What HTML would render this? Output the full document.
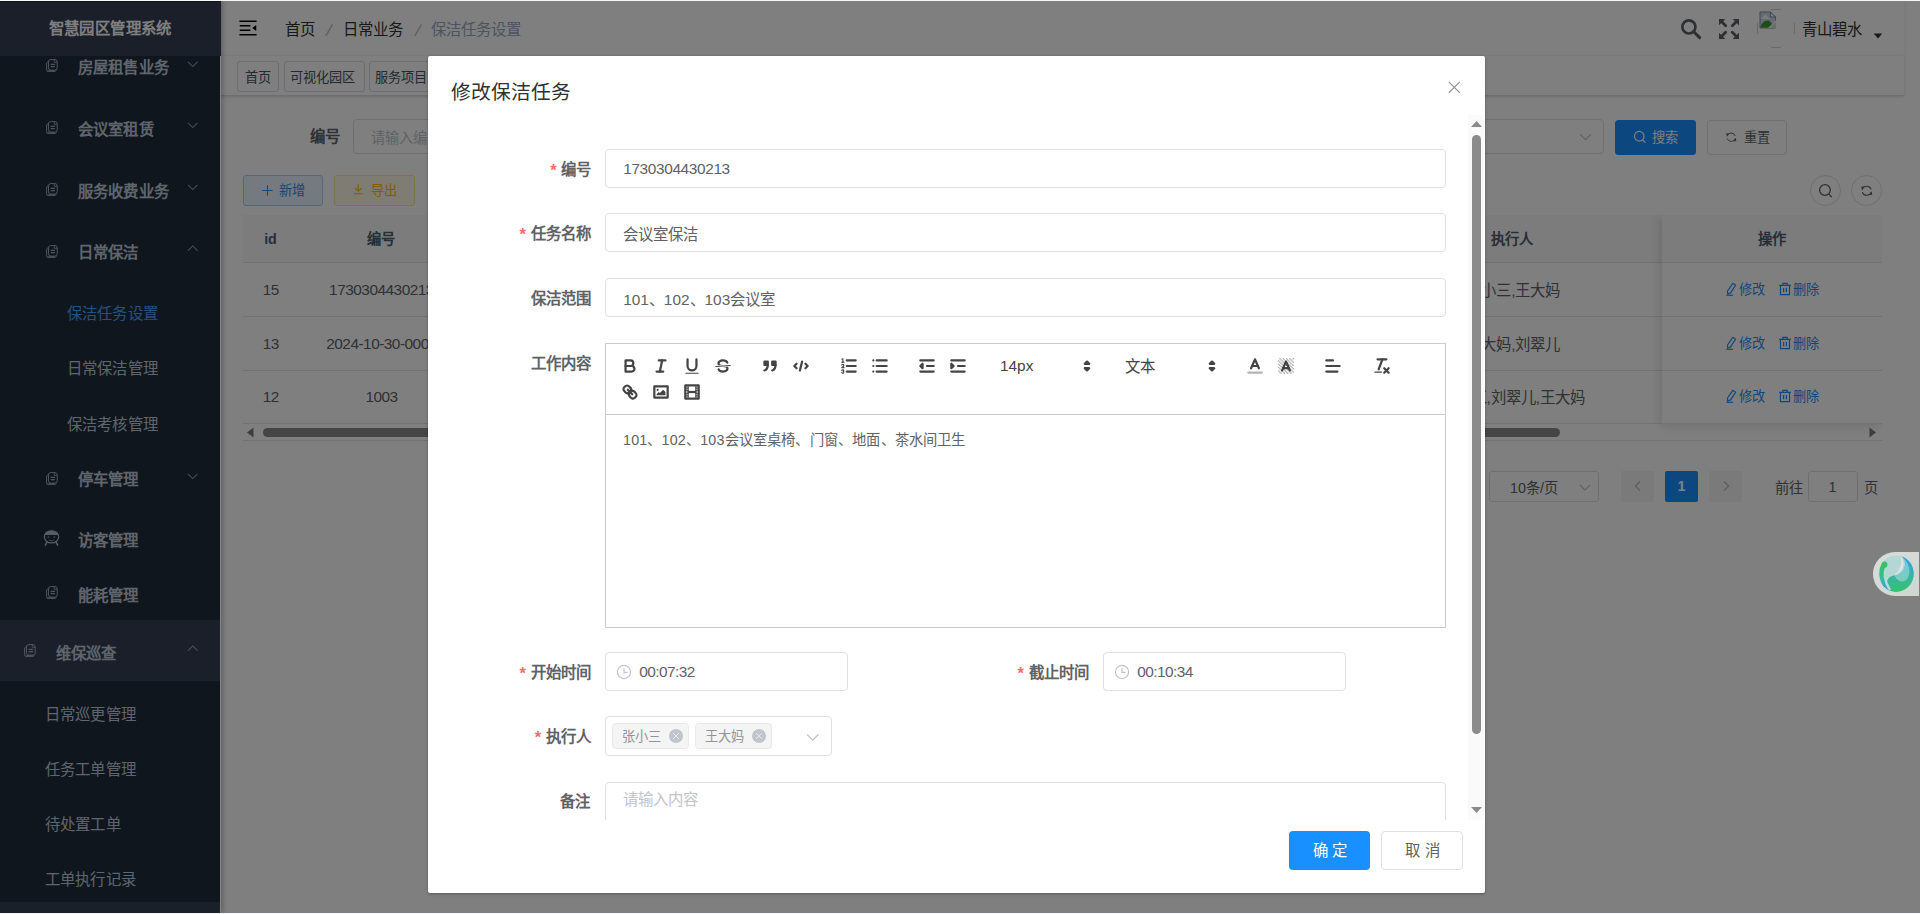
<!DOCTYPE html>
<html lang="zh-CN">
<head>
<meta charset="utf-8">
<title>智慧园区管理系统</title>
<style>
*{box-sizing:border-box;margin:0;padding:0}
html,body{width:1920px;height:914px;overflow:hidden;background:#fff}
body{font-family:"Liberation Sans",sans-serif;font-size:15.4px;color:#303133;position:relative}
svg{display:block}
.abs{position:absolute}
.t{position:absolute;white-space:nowrap;line-height:20px;height:20px}
#app{position:absolute;left:0;top:0;width:1920px;height:914px;overflow:hidden;background:#fff}
.sidebar{position:absolute;left:0;top:0;width:220px;height:914px;background:#1f2d3d;overflow:hidden;box-shadow:2px 0 6px rgba(0,21,41,.35);z-index:5;color:#bfcbd9}
.logo{position:absolute;left:0;top:0;width:221px;height:56px;background:#343e54;z-index:6}
.main{position:absolute;left:0;top:0;width:1904px;height:914px;background:#fff}
.navbar{position:absolute;left:220px;top:0;width:1684px;height:56px;background:#fff;box-shadow:0 1px 4px rgba(0,21,41,.08)}
.tags{position:absolute;left:220px;top:56px;width:1684px;height:40px;background:#fff;border-bottom:1px solid #d8dce5;box-shadow:0 1px 3px 0 rgba(0,0,0,.12),0 0 3px 0 rgba(0,0,0,.04)}
.tag{position:absolute;height:30px;border:1px solid #d8dce5;border-radius:3px;background:#fff}
.box{position:absolute;border:1px solid #dcdfe6;border-radius:4px;background:#fff}
.hl{position:absolute;height:1px;background:#dfe6ec}
.overlay{position:absolute;left:0;top:0;width:1920px;height:914px;background:rgba(0,0,0,.5);z-index:50}
.edge-top{position:absolute;left:0;top:0;width:1920px;height:1px;background:#f7f7f5;z-index:60}
.edge-bot{position:absolute;left:0;top:913px;width:1920px;height:1px;background:#f4f8fa;z-index:60}
.dialog{position:absolute;left:428px;top:56px;width:1057px;height:837px;background:#fff;border-radius:2px;box-shadow:0 1px 3px rgba(0,0,0,.3);z-index:70;overflow:hidden}
.g{position:absolute;left:-428px;top:-56px;width:1920px;height:914px}
.clip{position:absolute;left:0;top:59px;width:1057px;height:705px;overflow:hidden}
.clip .g{top:-115px}
.qi{position:absolute;width:20px;height:20px}
.qi .s{fill:none;stroke:#444;stroke-linecap:round;stroke-linejoin:round;stroke-width:2}
.qi .f{fill:#444}
.qi .t1{stroke-width:1}
</style>
</head>
<body>
<div id="app">
  <div class="sidebar">
    <div class="abs" style="left:0px;top:620px;width:220px;height:61px;background:#343f53"></div>
    <div class="abs" style="left:0px;top:902px;width:220px;height:12px;background:#343f53"></div>
    <span class="t" style="top:57.8px;font-size:15.4px;font-weight:bold;width:91.81px;text-align-last:justify;left:77.5px;letter-spacing:.3px;">房屋租售业务</span>
    <svg class="abs" style="left:45.85px;top:58.8px;width:11.7px;height:13.2px" viewBox="0 0 11.700 13.200" fill="none" stroke="currentColor" stroke-width="1" opacity=".8"><rect x="2.500" y="0.550" width="8.700" height="10.600" rx="2.300"/><path d="M8.300 0.700v2.600h2.800" stroke-width=".9"/><path d="M4.700 5.500h4.300M4.700 7.600h4.300" stroke-width="1.250"/><path d="M2.500 2.300L0.600 3.900v6.900a1.900 1.900 0 0 0 1.900 1.900h5.700a2.400 2.400 0 0 0 2.100-1.400"/><path d="M2.200 11.900h6.600" stroke-width="1.300"/></svg>
    <svg class="abs" style="left:186.55px;top:57.95px;width:11.5px;height:11.5px" viewBox="0 0 12 12" fill="none" stroke="currentColor" stroke-width="1.1" opacity="0.7"><path d="M1 4l5 5 5-5"/></svg>
    <span class="t" style="top:119.6px;font-size:15.4px;font-weight:bold;width:76.5px;text-align-last:justify;left:77.5px;letter-spacing:.3px;">会议室租赁</span>
    <svg class="abs" style="left:45.85px;top:120.8px;width:11.7px;height:13.2px" viewBox="0 0 11.700 13.200" fill="none" stroke="currentColor" stroke-width="1" opacity=".8"><rect x="2.500" y="0.550" width="8.700" height="10.600" rx="2.300"/><path d="M8.300 0.700v2.600h2.800" stroke-width=".9"/><path d="M4.700 5.500h4.300M4.700 7.600h4.300" stroke-width="1.250"/><path d="M2.500 2.300L0.600 3.900v6.900a1.900 1.900 0 0 0 1.900 1.900h5.700a2.400 2.400 0 0 0 2.100-1.400"/><path d="M2.200 11.900h6.600" stroke-width="1.300"/></svg>
    <svg class="abs" style="left:186.55px;top:119.05px;width:11.5px;height:11.5px" viewBox="0 0 12 12" fill="none" stroke="currentColor" stroke-width="1.1" opacity="0.7"><path d="M1 4l5 5 5-5"/></svg>
    <span class="t" style="top:181.6px;font-size:15.4px;font-weight:bold;width:91.81px;text-align-last:justify;left:77.5px;letter-spacing:.3px;">服务收费业务</span>
    <svg class="abs" style="left:45.85px;top:182.7px;width:11.7px;height:13.2px" viewBox="0 0 11.700 13.200" fill="none" stroke="currentColor" stroke-width="1" opacity=".8"><rect x="2.500" y="0.550" width="8.700" height="10.600" rx="2.300"/><path d="M8.300 0.700v2.600h2.800" stroke-width=".9"/><path d="M4.700 5.500h4.300M4.700 7.600h4.300" stroke-width="1.250"/><path d="M2.500 2.300L0.600 3.900v6.900a1.900 1.900 0 0 0 1.900 1.900h5.700a2.400 2.400 0 0 0 2.100-1.400"/><path d="M2.200 11.900h6.600" stroke-width="1.300"/></svg>
    <svg class="abs" style="left:186.55px;top:180.95px;width:11.5px;height:11.5px" viewBox="0 0 12 12" fill="none" stroke="currentColor" stroke-width="1.1" opacity="0.7"><path d="M1 4l5 5 5-5"/></svg>
    <span class="t" style="top:243.3px;font-size:15.4px;font-weight:bold;width:61.2px;text-align-last:justify;left:77.5px;letter-spacing:.3px;">日常保洁</span>
    <svg class="abs" style="left:45.85px;top:244.7px;width:11.7px;height:13.2px" viewBox="0 0 11.700 13.200" fill="none" stroke="currentColor" stroke-width="1" opacity=".8"><rect x="2.500" y="0.550" width="8.700" height="10.600" rx="2.300"/><path d="M8.300 0.700v2.600h2.800" stroke-width=".9"/><path d="M4.700 5.500h4.300M4.700 7.600h4.300" stroke-width="1.250"/><path d="M2.500 2.300L0.600 3.900v6.900a1.900 1.900 0 0 0 1.900 1.900h5.700a2.400 2.400 0 0 0 2.100-1.400"/><path d="M2.200 11.900h6.600" stroke-width="1.300"/></svg>
    <svg class="abs" style="left:186.55px;top:242.95px;width:11.5px;height:11.5px" viewBox="0 0 12 12" fill="none" stroke="currentColor" stroke-width="1.1" opacity="0.7"><path d="M1 8L6 3l5 5"/></svg>
    <span class="t" style="top:304.2px;font-size:15.4px;color:#4aa3ff;width:91.81px;text-align-last:justify;left:66.5px;letter-spacing:.3px;">保洁任务设置</span>
    <span class="t" style="top:359.4px;font-size:15.4px;width:91.81px;text-align-last:justify;left:66.5px;letter-spacing:.3px;">日常保洁管理</span>
    <span class="t" style="top:414.5px;font-size:15.4px;width:91.81px;text-align-last:justify;left:66.5px;letter-spacing:.3px;">保洁考核管理</span>
    <span class="t" style="top:470.3px;font-size:15.4px;font-weight:bold;width:61.2px;text-align-last:justify;left:77.5px;letter-spacing:.3px;">停车管理</span>
    <svg class="abs" style="left:45.85px;top:471.8px;width:11.7px;height:13.2px" viewBox="0 0 11.700 13.200" fill="none" stroke="currentColor" stroke-width="1" opacity=".8"><rect x="2.500" y="0.550" width="8.700" height="10.600" rx="2.300"/><path d="M8.300 0.700v2.600h2.800" stroke-width=".9"/><path d="M4.700 5.500h4.300M4.700 7.600h4.300" stroke-width="1.250"/><path d="M2.500 2.300L0.600 3.900v6.900a1.900 1.900 0 0 0 1.900 1.900h5.700a2.400 2.400 0 0 0 2.100-1.400"/><path d="M2.200 11.900h6.600" stroke-width="1.300"/></svg>
    <svg class="abs" style="left:186.55px;top:469.85px;width:11.5px;height:11.5px" viewBox="0 0 12 12" fill="none" stroke="currentColor" stroke-width="1.1" opacity="0.7"><path d="M1 4l5 5 5-5"/></svg>
    <span class="t" style="top:530.5px;font-size:15.4px;font-weight:bold;width:61.2px;text-align-last:justify;left:77.5px;letter-spacing:.3px;">访客管理</span>
    <svg class="abs" style="left:43.1px;top:529.6px;width:17px;height:16px" viewBox="0 0 17 16" opacity=".9"><clipPath id="pc"><rect x="0" y="0" width="17" height="4.900"/></clipPath><ellipse cx="8.500" cy="6.850" rx="7.200" ry="6.100" fill="none" stroke="currentColor" stroke-width="1.250"/><ellipse cx="8.500" cy="6.850" rx="7.200" ry="6.100" fill="currentColor" clip-path="url(#pc)"/><circle cx="5.500" cy="7" r=".85" fill="currentColor" opacity=".8"/><circle cx="11.450" cy="7" r=".85" fill="currentColor" opacity=".8"/><path d="M6 9.900c1.300.9 3.400.9 4.900 0" stroke="currentColor" stroke-width=".9" fill="none" opacity=".8"/><path d="M3.800 12.300L2.400 15.200M13.200 12.300l1.400 2.900" stroke="currentColor" stroke-width="1.500" fill="none" stroke-linecap="round"/></svg>
    <span class="t" style="top:585.6px;font-size:15.4px;font-weight:bold;width:61.2px;text-align-last:justify;left:77.5px;letter-spacing:.3px;">能耗管理</span>
    <svg class="abs" style="left:45.85px;top:585.9px;width:11.7px;height:13.2px" viewBox="0 0 11.700 13.200" fill="none" stroke="currentColor" stroke-width="1" opacity=".8"><rect x="2.500" y="0.550" width="8.700" height="10.600" rx="2.300"/><path d="M8.300 0.700v2.600h2.800" stroke-width=".9"/><path d="M4.700 5.500h4.300M4.700 7.600h4.300" stroke-width="1.250"/><path d="M2.500 2.300L0.600 3.900v6.900a1.900 1.900 0 0 0 1.900 1.900h5.700a2.400 2.400 0 0 0 2.100-1.400"/><path d="M2.200 11.900h6.600" stroke-width="1.300"/></svg>
    <span class="t" style="top:643.8px;font-size:15.4px;font-weight:bold;width:61.2px;text-align-last:justify;left:55.5px;letter-spacing:.3px;">维保巡查</span>
    <svg class="abs" style="left:23.85px;top:643.9px;width:11.7px;height:13.2px" viewBox="0 0 11.700 13.200" fill="none" stroke="currentColor" stroke-width="1" opacity=".8"><rect x="2.500" y="0.550" width="8.700" height="10.600" rx="2.300"/><path d="M8.300 0.700v2.600h2.800" stroke-width=".9"/><path d="M4.700 5.500h4.300M4.700 7.600h4.300" stroke-width="1.250"/><path d="M2.500 2.300L0.600 3.900v6.900a1.900 1.900 0 0 0 1.900 1.900h5.700a2.400 2.400 0 0 0 2.100-1.400"/><path d="M2.200 11.900h6.600" stroke-width="1.300"/></svg>
    <svg class="abs" style="left:186.55px;top:642.95px;width:11.5px;height:11.5px" viewBox="0 0 12 12" fill="none" stroke="currentColor" stroke-width="1.1" opacity="0.7"><path d="M1 8L6 3l5 5"/></svg>
    <span class="t" style="top:704.5px;font-size:15.4px;width:91.81px;text-align-last:justify;left:44.5px;letter-spacing:.3px;">日常巡更管理</span>
    <span class="t" style="top:759.5px;font-size:15.4px;width:91.81px;text-align-last:justify;left:44.5px;letter-spacing:.3px;">任务工单管理</span>
    <span class="t" style="top:814.5px;font-size:15.4px;width:76.5px;text-align-last:justify;left:44.5px;letter-spacing:.3px;">待处置工单</span>
    <span class="t" style="top:869.6px;font-size:15.4px;width:91.81px;text-align-last:justify;left:44.5px;letter-spacing:.3px;">工单执行记录</span>
  </div>
  <div class="logo"><span class="t" style="top:18.8px;font-size:15.4px;color:#fff;font-weight:bold;width:123.2px;text-align-last:justify;left:48.7px;letter-spacing:.4px;">智慧园区管理系统</span></div>
  <div class="main">
    <div class="navbar"></div>
    <svg class="abs" style="left:237px;top:17px;width:22px;height:22px;transform:rotate(180deg)" viewBox="0 0 1024 1024" fill="#000"><path d="M408 442h480c4.400 0 8-3.600 8-8v-56c0-4.400-3.600-8-8-8H408c-4.400 0-8 3.600-8 8v56c0 4.400 3.600 8 8 8zm-8 204c0 4.400 3.600 8 8 8h480c4.400 0 8-3.600 8-8v-56c0-4.400-3.600-8-8-8H408c-4.400 0-8 3.600-8 8v56zm504-486H120c-4.400 0-8 3.600-8 8v56c0 4.400 3.600 8 8 8h784c4.400 0 8-3.600 8-8v-56c0-4.400-3.600-8-8-8zm0 632H120c-4.400 0-8 3.600-8 8v56c0 4.400 3.600 8 8 8h784c4.400 0 8-3.600 8-8v-56c0-4.400-3.600-8-8-8zM142.400 642.100L298.700 519a8.840 8.840 0 0 0 0-13.900L142.400 381.900c-5.800-4.600-14.400-.5-14.400 6.900v246.300a8.900 8.900 0 0 0 14.400 7z"/></svg>
    <span class="t" style="top:20px;font-size:15.4px;width:30px;text-align-last:justify;left:285px;">首页</span>
    <svg class="abs" style="left:325.3px;top:23.8px;width:8.4px;height:12.4px" viewBox="0 0 8.400 12.400" stroke="#c0c4cc" stroke-width="1.500" fill="none"><path d="M0.900 12L7.500 0.400"/></svg>
    <span class="t" style="top:20px;font-size:15.4px;width:60px;text-align-last:justify;left:343px;">日常业务</span>
    <svg class="abs" style="left:413.8px;top:23.8px;width:8.4px;height:12.4px" viewBox="0 0 8.400 12.400" stroke="#c0c4cc" stroke-width="1.500" fill="none"><path d="M0.900 12L7.500 0.400"/></svg>
    <span class="t" style="top:20px;font-size:15.4px;color:#97a8be;width:90px;text-align-last:justify;left:431px;">保洁任务设置</span>
    <svg class="abs" style="left:1679px;top:17px;width:24px;height:24px" viewBox="0 0 24 24" fill="none" stroke="#5a5e66" stroke-linecap="round"><circle cx="9.900" cy="9.900" r="6.550" stroke-width="2.600"/><path d="M15 15L20.600 20.600" stroke-width="3"/></svg>
    <svg class="abs" style="left:1719px;top:19px;width:20px;height:20px" viewBox="0 0 20 20" fill="#5a5e66" stroke="#5a5e66"><g><path d="M0 0h6.300L0 6.300z" stroke="none"/><path d="M2.500 2.500L6.700 6.700" fill="none" stroke-width="2.800" stroke-linecap="round"/></g><g transform="translate(20 0) scale(-1 1)"><path d="M0 0h6.300L0 6.300z" stroke="none"/><path d="M2.500 2.500L6.700 6.700" fill="none" stroke-width="2.800" stroke-linecap="round"/></g><g transform="translate(0 20) scale(1 -1)"><path d="M0 0h6.300L0 6.300z" stroke="none"/><path d="M2.500 2.500L6.700 6.700" fill="none" stroke-width="2.800" stroke-linecap="round"/></g><g transform="translate(20 20) scale(-1 -1)"><path d="M0 0h6.300L0 6.300z" stroke="none"/><path d="M2.500 2.500L6.700 6.700" fill="none" stroke-width="2.800" stroke-linecap="round"/></g></svg>
    <div class="abs" style="left:1771px;top:9px;width:10px;height:1px;background:#d0d0d0"></div>
    <div class="abs" style="left:1771px;top:47px;width:10px;height:1px;background:#d0d0d0"></div>
    <div class="abs" style="left:1757px;top:23px;width:1px;height:11px;background:#d0d0d0"></div>
    <div class="abs" style="left:1794px;top:23px;width:1px;height:11px;background:#d0d0d0"></div>
    <svg class="abs" style="left:1759px;top:11px;width:18px;height:18px" viewBox="0 0 18 18" ><path d="M1 1h10.500l5 5v11H1z" fill="#c9d7f1" stroke="#8a8f98" stroke-width="1"/><path d="M11.500 1v5h5z" fill="#fff" stroke="#8a8f98" stroke-width="1"/><path d="M1.500 16.500c1-5 5-8 9-6.500l6 6.500z" fill="#3c9a2c"/><path d="M2 8l4.500-4.500L11 8z" fill="#fff" opacity=".85"/><path d="M17 9L9 17h8z" fill="#fff"/><path d="M17 10.500L10.500 17H17z" fill="#d9dde4"/></svg>
    <span class="t" style="top:20.3px;font-size:15.4px;width:60px;text-align-last:justify;left:1802px;">青山碧水</span>
    <svg class="abs" style="left:1873px;top:33px;width:10px;height:6px" viewBox="0 0 10 6" fill="#303133"><path d="M0.800 0.500h8.400L5 5.500z"/></svg>
    <div class="tags"></div>
    <div class="tag" style="left:237px;top:61px;width:42px;height:30.600px"></div>
    <span class="t" style="top:68.2px;font-size:13.2px;color:#495060;width:26px;text-align-last:justify;left:245.3px;">首页</span>
    <div class="tag" style="left:284px;top:61px;width:81px;height:30.600px"></div>
    <span class="t" style="top:68.2px;font-size:13.2px;color:#495060;width:65px;text-align-last:justify;left:290px;">可视化园区</span>
    <div class="tag" style="left:369px;top:61px;width:92px;height:30.600px"></div>
    <span class="t" style="top:68.2px;font-size:13.2px;color:#495060;width:78px;text-align-last:justify;left:375px;">服务项目管理</span>
    <span class="t" style="top:127px;font-size:15.4px;color:#606266;font-weight:bold;width:30px;text-align-last:justify;left:309.7px;">编号</span>
    <div class="box" style="left:353px;top:119.400px;width:260px;height:34.600px"></div>
    <span class="t" style="top:128px;font-size:14.3px;color:#c0c4cc;width:70px;text-align-last:justify;left:371px;">请输入编号</span>
    <div class="box" style="left:1344px;top:119.400px;width:260px;height:34.600px"></div>
    <svg class="abs" style="left:1578.5px;top:130px;width:13px;height:13px" viewBox="0 0 12 12" fill="none" stroke="#c0c4cc" stroke-width="1.1" opacity="1"><path d="M1 4l5 5 5-5"/></svg>
    <div class="abs" style="left:1615px;top:120px;width:81px;height:35px;background:#1890ff;border-radius:3.500px"></div>
    <svg class="abs" style="left:1632.55px;top:130.45px;width:13.5px;height:13.5px" viewBox="0 0 14 14" fill="none" stroke="#fff" stroke-width="1.3" stroke-linecap="round"><circle cx="6.500" cy="6.500" r="5"/><path d="M10.200 10.400l2.300 2.400"/></svg>
    <span class="t" style="top:128px;font-size:13.2px;color:#fff;width:26px;text-align-last:justify;left:1652.3px;">搜索</span>
    <div class="box" style="left:1707px;top:120px;width:80px;height:35px;border-radius:3.500px"></div>
    <svg class="abs" style="left:1724.75px;top:130.75px;width:12.5px;height:12.5px" viewBox="0 0 14 14" fill="none" stroke="#606266" stroke-width="1.1" stroke-linecap="round" stroke-linejoin="round"><path d="M2.400 5.600A4.800 4.800 0 0 1 11.400 5.200"/><path d="M11.600 8.400A4.800 4.800 0 0 1 2.600 8.800"/><path d="M1.300 2.600L4.600 2.900L2 5.900z" fill="#606266" stroke="none"/><path d="M12.700 11.400L9.400 11.100L12 8.100z" fill="#606266" stroke="none"/></svg>
    <span class="t" style="top:128px;font-size:13.2px;color:#606266;width:26px;text-align-last:justify;left:1743.7px;">重置</span>
    <div class="box" style="left:243px;top:175px;width:80px;height:31px;background:#e8f4ff;border-color:#a3d3ff;border-radius:3px"></div>
    <svg class="abs" style="left:260.8px;top:184px;width:13px;height:13px" viewBox="0 0 13 13" stroke="#1890ff" stroke-width="1.050"><path d="M6.500 1.300v10.400M1.300 6.500h10.400"/></svg>
    <span class="t" style="top:181.2px;font-size:13.2px;color:#1890ff;width:26px;text-align-last:justify;left:279.2px;">新增</span>
    <div class="box" style="left:334px;top:175px;width:81px;height:31px;background:#fff8e6;border-color:#ffe399;border-radius:3px"></div>
    <svg class="abs" style="left:351.8px;top:183.3px;width:12.4px;height:12.4px" viewBox="0 0 13 13" fill="none" stroke="#ffba00" stroke-width="1.150"><path d="M6.500 1.500v7M3.200 5.300l3.300 3.300 3.300-3.300M1.800 11.300h9.400"/></svg>
    <span class="t" style="top:181.2px;font-size:13.2px;color:#ffba00;width:26px;text-align-last:justify;left:371.2px;">导出</span>
    <div class="box" style="left:1810px;top:175px;width:31px;height:31px;border-radius:50%"></div>
    <svg class="abs" style="left:1818.3px;top:183px;width:15px;height:15px" viewBox="0 0 14 14" fill="none" stroke="#606266" stroke-width="1.2" stroke-linecap="round"><circle cx="6.500" cy="6.500" r="5"/><path d="M10.200 10.400l2.300 2.400"/></svg>
    <div class="box" style="left:1851px;top:175px;width:31px;height:31px;border-radius:50%"></div>
    <svg class="abs" style="left:1860.05px;top:183.75px;width:13.5px;height:13.5px" viewBox="0 0 14 14" fill="none" stroke="#606266" stroke-width="1.1" stroke-linecap="round" stroke-linejoin="round"><path d="M2.400 5.600A4.800 4.800 0 0 1 11.400 5.200"/><path d="M11.600 8.400A4.800 4.800 0 0 1 2.600 8.800"/><path d="M1.300 2.600L4.600 2.900L2 5.900z" fill="#606266" stroke="none"/><path d="M12.700 11.400L9.400 11.100L12 8.100z" fill="#606266" stroke="none"/></svg>
    <div class="abs" style="left:243px;top:215px;width:1639px;height:47px;background:#f8f8f9"></div>
    <div class="hl" style="left:243px;top:262px;width:1639px"></div>
    <div class="hl" style="left:243px;top:316px;width:1639px"></div>
    <div class="hl" style="left:243px;top:370px;width:1639px"></div>
    <div class="hl" style="left:243px;top:423px;width:1639px"></div>
    <div class="hl" style="left:243px;top:440px;width:1639px"></div>
    <span class="t" style="top:229px;font-size:14.3px;color:#515a6e;font-weight:bold;left:70.5px;width:400px;text-align:center;">id</span>
    <span class="t" style="top:229.3px;font-size:14.3px;color:#515a6e;font-weight:bold;width:28px;text-align-last:justify;left:366.5px;">编号</span>
    <span class="t" style="top:229.3px;font-size:14.3px;color:#515a6e;font-weight:bold;width:42px;text-align-last:justify;left:1490.5px;">执行人</span>
    <span class="t" style="top:280.2px;font-size:15.4px;color:#606266;left:70.7px;width:400px;text-align:center;letter-spacing:-.5px;">15</span>
    <span class="t" style="top:280.2px;font-size:15.4px;color:#606266;left:181.5px;width:400px;text-align:center;letter-spacing:-.5px;">1730304430213</span>
    <span class="t" style="top:281.2px;font-size:15.4px;color:#606266;width:94.28px;text-align-last:justify;left:1466.16px;">张小三,王大妈</span>
    <span class="t" style="top:333.5px;font-size:15.4px;color:#606266;left:70.7px;width:400px;text-align:center;letter-spacing:-.5px;">13</span>
    <span class="t" style="top:333.5px;font-size:15.4px;color:#606266;left:181.5px;width:400px;text-align:center;letter-spacing:-.5px;">2024-10-30-0001</span>
    <span class="t" style="top:334.5px;font-size:15.4px;color:#606266;width:94.28px;text-align-last:justify;left:1466.16px;">王大妈,刘翠儿</span>
    <span class="t" style="top:387.4px;font-size:15.4px;color:#606266;left:70.7px;width:400px;text-align:center;letter-spacing:-.5px;">12</span>
    <span class="t" style="top:387.4px;font-size:15.4px;color:#606266;left:181.5px;width:400px;text-align:center;letter-spacing:-.5px;">1003</span>
    <span class="t" style="top:388.4px;font-size:15.4px;color:#606266;width:143.56px;text-align-last:justify;left:1441.52px;">张小三,刘翠儿,王大妈</span>
    <div class="abs" style="left:1662px;top:215px;width:220px;height:209px;box-shadow:-2px 2px 10px rgba(0,0,0,.13);clip-path:inset(0 0 -14px -14px);background:#fff"><div class="abs" style="left:0;top:0;width:220px;height:47px;background:#f8f8f9"></div><div class="hl" style="left:0;top:47px;width:220px"></div><div class="hl" style="left:0;top:101px;width:220px"></div><div class="hl" style="left:0;top:155px;width:220px"></div><div class="hl" style="left:0;top:208px;width:220px"></div></div>
    <span class="t" style="top:229.3px;font-size:14.3px;color:#515a6e;font-weight:bold;width:28px;text-align-last:justify;left:1757.5px;">操作</span>
    <svg class="abs" style="left:1724.2px;top:282px;width:14px;height:14px" viewBox="0 0 13 13" fill="none" stroke="#1890ff" stroke-width="1.100" stroke-linejoin="round"><path d="M8.200 1.200l2.600 1.700-4.700 7.200-2.900 1 .2-3z"/><path d="M2.200 12.300h6.200"/></svg>
    <span class="t" style="top:279.8px;font-size:13.2px;color:#1890ff;width:26px;text-align-last:justify;left:1739px;">修改</span>
    <svg class="abs" style="left:1778.3px;top:282.2px;width:14px;height:14px" viewBox="0 0 13 13" fill="none" stroke="#1890ff" stroke-width="1.100"><path d="M1 3.200h11M4.500 3V1.300h4V3M2.300 3.300v8.400h8.400V3.300M5.200 5.500v4M7.800 5.500v4"/></svg>
    <span class="t" style="top:279.8px;font-size:13.2px;color:#1890ff;width:26px;text-align-last:justify;left:1793px;">删除</span>
    <svg class="abs" style="left:1724.2px;top:335.8px;width:14px;height:14px" viewBox="0 0 13 13" fill="none" stroke="#1890ff" stroke-width="1.100" stroke-linejoin="round"><path d="M8.200 1.200l2.600 1.700-4.700 7.200-2.900 1 .2-3z"/><path d="M2.200 12.300h6.200"/></svg>
    <span class="t" style="top:333.6px;font-size:13.2px;color:#1890ff;width:26px;text-align-last:justify;left:1739px;">修改</span>
    <svg class="abs" style="left:1778.3px;top:336px;width:14px;height:14px" viewBox="0 0 13 13" fill="none" stroke="#1890ff" stroke-width="1.100"><path d="M1 3.200h11M4.500 3V1.300h4V3M2.300 3.300v8.400h8.400V3.300M5.200 5.500v4M7.800 5.500v4"/></svg>
    <span class="t" style="top:333.6px;font-size:13.2px;color:#1890ff;width:26px;text-align-last:justify;left:1793px;">删除</span>
    <svg class="abs" style="left:1724.2px;top:388.7px;width:14px;height:14px" viewBox="0 0 13 13" fill="none" stroke="#1890ff" stroke-width="1.100" stroke-linejoin="round"><path d="M8.200 1.200l2.600 1.700-4.700 7.200-2.900 1 .2-3z"/><path d="M2.200 12.300h6.200"/></svg>
    <span class="t" style="top:386.5px;font-size:13.2px;color:#1890ff;width:26px;text-align-last:justify;left:1739px;">修改</span>
    <svg class="abs" style="left:1778.3px;top:388.9px;width:14px;height:14px" viewBox="0 0 13 13" fill="none" stroke="#1890ff" stroke-width="1.100"><path d="M1 3.200h11M4.500 3V1.300h4V3M2.300 3.300v8.400h8.400V3.300M5.200 5.500v4M7.800 5.500v4"/></svg>
    <span class="t" style="top:386.5px;font-size:13.2px;color:#1890ff;width:26px;text-align-last:justify;left:1793px;">删除</span>
    <svg class="abs" style="left:246px;top:427px;width:8px;height:11px" viewBox="0 0 8 11" fill="#7d7d7d"><path d="M7.500 0.500v10L1 5.500z"/></svg>
    <div class="abs" style="left:263px;top:428px;width:1297px;height:9px;border-radius:5px;background:#8b8b8b"></div>
    <svg class="abs" style="left:1869px;top:427px;width:8px;height:11px" viewBox="0 0 8 11" fill="#7d7d7d"><path d="M0.500 0.500v10L7 5.500z"/></svg>
    <div class="box" style="left:1489px;top:471.2px;width:110px;height:30.8px;border-radius:3px"></div>
    <span class="t" style="top:478px;font-size:14.3px;color:#606266;width:47.88px;text-align-last:justify;left:1510px;">10条/页</span>
    <svg class="abs" style="left:1579px;top:481.3px;width:12px;height:12px" viewBox="0 0 12 12" fill="none" stroke="#c0c4cc" stroke-width="1.1" opacity="1"><path d="M1 4l5 5 5-5"/></svg>
    <div class="abs" style="left:1621px;top:471.2px;width:33px;height:30.8px;border-radius:2px;background:#f4f4f5"></div>
    <svg class="abs" style="left:1631.5px;top:480px;width:12px;height:12px" viewBox="0 0 12 12" fill="none" stroke="#c0c4cc" stroke-width="1.700"><path d="M8 1.500L3.500 6 8 10.500"/></svg>
    <div class="abs" style="left:1665px;top:471.2px;width:33px;height:30.8px;border-radius:2px;background:#1890ff"></div>
    <span class="t" style="top:476.2px;font-size:14.3px;color:#fff;font-weight:bold;left:1481.5px;width:400px;text-align:center;">1</span>
    <div class="abs" style="left:1709px;top:471.2px;width:33px;height:30.8px;border-radius:2px;background:#f4f4f5"></div>
    <svg class="abs" style="left:1720px;top:480px;width:12px;height:12px" viewBox="0 0 12 12" fill="none" stroke="#c0c4cc" stroke-width="1.700"><path d="M4 1.500L8.500 6 4 10.500"/></svg>
    <span class="t" style="top:477.8px;font-size:14.3px;color:#606266;width:28px;text-align-last:justify;left:1775px;">前往</span>
    <div class="box" style="left:1807.500px;top:471.2px;width:50px;height:30.8px;border-radius:3px"></div>
    <span class="t" style="top:477.2px;font-size:14.3px;color:#606266;left:1632.5px;width:400px;text-align:center;">1</span>
    <span class="t" style="top:477.8px;font-size:14.3px;color:#606266;left:1863.5px;">页</span>
  </div>
</div>
<div class="overlay"></div>
<div class="edge-top"></div>
<div class="abs" style="left:0;top:1px;width:220px;height:1px;background:#0c121f;z-index:60"></div>
<div class="edge-bot"></div>
<div class="abs" style="left:220px;top:56px;width:1px;height:857px;background:#878787;z-index:60"></div>
<div class="abs" style="left:1873px;top:552px;width:46px;height:44px;border-radius:22px 0 0 22px;background:linear-gradient(135deg,#dadedb,#cfd5d1);z-index:80"></div>
<svg class="abs" style="left:1878.400px;top:555.300px;width:36.200px;height:37.400px;z-index:81" viewBox="0 0 36 36" preserveAspectRatio="none">
  <defs>
    <linearGradient id="wg1" x1="0" y1="0" x2="0" y2="1"><stop offset="0" stop-color="#2aa3e6"/><stop offset=".55" stop-color="#3ab3a6"/><stop offset="1" stop-color="#34c46a"/></linearGradient>
    <linearGradient id="wg2" x1="0" y1="0" x2="0" y2="1"><stop offset="0" stop-color="#34c46a"/><stop offset=".6" stop-color="#3cb7a0"/><stop offset="1" stop-color="#2aa3e6"/></linearGradient>
    <clipPath id="wc"><circle cx="18" cy="18" r="17.600"/></clipPath>
  </defs>
  <g clip-path="url(#wc)">
    <circle cx="18" cy="18" r="17.600" fill="#b4d6d4"/>
    <path d="M21.500 0C27 1 36 6 36 18S28 36 17 36c-3.500 0-6-1-7.500-3C6.500 28.500 9 21 15.500 19.800 25 18 31 10 23.500 1z" fill="url(#wg1)"/>
    <path d="M24 2c6 7 3 15-7.500 17.600 1 4 5.500 7 10 5.500C33.500 22 33 8 24 2z" fill="#fff" opacity=".33"/>
    <path d="M22.300 0.600C28 8 25.500 16.500 15.500 19.800 21.500 16 24.800 9.500 22.300 0.600z" fill="#e3e6e6"/>
    <path d="M6.200 9.500C2.500 15 3 25 10.500 32.500" fill="none" stroke="url(#wg2)" stroke-width="5.200" stroke-linecap="round"/>
    <path d="M8.800 11C5.500 17 6.500 26 11.500 33" fill="none" stroke="#b9d9d2" stroke-width="2.600" stroke-linecap="round"/>
    <circle cx="6.400" cy="9.300" r="3" fill="#34c46a"/>
  </g>
</svg>
<div class="dialog">
  <div class="g">
  <span class="t" style="top:81.9px;font-size:19.8px;color:#303133;width:120px;text-align-last:justify;left:451px;">修改保洁任务</span>
  <svg class="abs" style="left:1447.7px;top:81px;width:12.6px;height:12.6px" viewBox="0 0 12 12" stroke="#909399" stroke-width="1.100"><path d="M0.800 0.800l10.400 10.400M11.200 0.800L0.800 11.200"/></svg>
  </div>
  <div class="clip"><div class="g">
  <span class="t" style="top:159.6px;font-size:15.4px;color:#606266;font-weight:bold;width:30px;text-align-last:justify;right:1328.7px;">编号</span><span class="t" style="top:159.5px;font-size:16.5px;color:#f56c6c;font-weight:bold;left:550.2px;">*</span>
  <div class="box" style="left:605px;top:149px;width:841px;height:39.4px"></div>
  <span class="t" style="top:159.4px;font-size:15.4px;color:#606266;left:623.2px;letter-spacing:-0.36px;">1730304430213</span>
  <span class="t" style="top:223.6px;font-size:15.4px;color:#606266;font-weight:bold;width:60px;text-align-last:justify;right:1328.7px;">任务名称</span><span class="t" style="top:223.5px;font-size:16.5px;color:#f56c6c;font-weight:bold;left:519.4px;">*</span>
  <div class="box" style="left:605px;top:213px;width:841px;height:39.4px"></div>
  <span class="t" style="top:225.3px;font-size:15.4px;color:#606266;width:75px;text-align-last:justify;left:623.2px;">会议室保洁</span>
  <span class="t" style="top:288.6px;font-size:15.4px;color:#606266;font-weight:bold;width:60px;text-align-last:justify;right:1328.7px;">保洁范围</span>
  <div class="box" style="left:605px;top:278px;width:841px;height:39.4px"></div>
  <span class="t" style="top:290.3px;font-size:15.4px;color:#606266;width:152.05px;text-align-last:justify;left:623.2px;">101、102、103会议室</span>
  <span class="t" style="top:353.8px;font-size:15.4px;color:#606266;font-weight:bold;width:60px;text-align-last:justify;right:1328.7px;">工作内容</span>
  <div class="abs" style="left:605px;top:343px;width:841px;height:72px;border:1px solid #ccc;background:#fff"></div>
  <div class="abs" style="left:605px;top:414px;width:841px;height:214px;border:1px solid #ccc;background:#fff"></div>
  <svg class="qi" style="left:619.7px;top:356px" viewBox="0 0 18 18"><path class="s" d="M5,4H9.500A2.500,2.500,0,0,1,12,6.500v0A2.500,2.500,0,0,1,9.500,9H5V4Z"/><path class="s" d="M5,9h5.500A2.500,2.500,0,0,1,13,11.500v0A2.500,2.500,0,0,1,10.500,14H5V9Z"/></svg>
  <svg class="qi" style="left:650.7px;top:356px" viewBox="0 0 18 18"><line class="s" x1="7" x2="13" y1="4" y2="4"/><line class="s" x1="5" x2="11" y1="14" y2="14"/><line class="s" x1="8" x2="10" y1="14" y2="4"/></svg>
  <svg class="qi" style="left:681.7px;top:356px" viewBox="0 0 18 18"><path class="s" d="M5,3V9a4.012,4.012,0,0,0,4,4H9a4.012,4.012,0,0,0,4-4V3"/><rect class="f" height="1" rx="0.500" ry="0.500" width="12" x="3" y="15"/></svg>
  <svg class="qi" style="left:712.7px;top:356px" viewBox="0 0 18 18"><line class="s t1" x1="15.500" x2="2.500" y1="8.500" y2="9.500"/><path class="f" d="M9.007,8C6.542,7.791,6,7.519,6,6.500,6,5.792,7.283,5,9,5c1.571,0,2.765.679,2.969,1.309a1,1,0,0,0,1.900-.617C13.356,4.106,11.354,3,9,3,6.200,3,4,4.538,4,6.500a3.200,3.200,0,0,0,.5,1.843Z"/><path class="f" d="M8.984,10C11.457,10.208,12,10.479,12,11.500c0,0.708-1.283,1.500-3,1.500-1.571,0-2.765-.679-2.969-1.309a1,1,0,1,0-1.900.617C4.644,13.894,6.646,15,9,15c2.800,0,5-1.538,5-3.500a3.200,3.200,0,0,0-.5-1.843Z"/></svg>
  <svg class="qi" style="left:759.7px;top:356px" viewBox="0 0 18 18"><rect class="f s" height="3" width="3" x="4" y="5"/><rect class="f s" height="3" width="3" x="11" y="5"/><path class="f s" d="M7,8c0,4.031-3,5-3,5"/><path class="f s" d="M14,8c0,4.031-3,5-3,5"/></svg>
  <svg class="qi" style="left:790.7px;top:356px" viewBox="0 0 18 18"><polyline class="s" points="5 7 3 9 5 11"/><polyline class="s" points="13 7 15 9 13 11"/><line class="s" x1="10" x2="8" y1="5" y2="13"/></svg>
  <svg class="qi" style="left:838.7px;top:356px" viewBox="0 0 18 18"><line class="s" x1="7" x2="15" y1="4" y2="4"/><line class="s" x1="7" x2="15" y1="9" y2="9"/><line class="s" x1="7" x2="15" y1="14" y2="14"/><line class="s t1" x1="2.500" x2="4.500" y1="5.500" y2="5.500"/><path class="f" d="M3.500,6A0.500,0.500,0,0,1,3,5.500V3.085l-0.276.138A0.500,0.500,0,0,1,2.053,3c-0.124-.247-0.023-0.324.224-0.447l1-.5A0.500,0.500,0,0,1,4,2.500v3A0.500,0.500,0,0,1,3.500,6Z"/><path class="s t1" d="M4.500,10.500h-2c0-.234,1.850-1.076,1.850-2.234A0.959,0.959,0,0,0,2.500,8.156"/><path class="s t1" d="M2.500,14.846a0.959,0.959,0,0,0,1.850-.109A0.700,0.700,0,0,0,3.750,14a0.688,0.688,0,0,0,.6-0.736,0.959,0.959,0,0,0-1.850-.109"/></svg>
  <svg class="qi" style="left:869.7px;top:356px" viewBox="0 0 18 18"><line class="s" x1="6" x2="15" y1="4" y2="4"/><line class="s" x1="6" x2="15" y1="9" y2="9"/><line class="s" x1="6" x2="15" y1="14" y2="14"/><line class="s" x1="3" x2="3" y1="4" y2="4"/><line class="s" x1="3" x2="3" y1="9" y2="9"/><line class="s" x1="3" x2="3" y1="14" y2="14"/></svg>
  <svg class="qi" style="left:916.7px;top:356px" viewBox="0 0 18 18"><line class="s" x1="3" x2="15" y1="14" y2="14"/><line class="s" x1="3" x2="15" y1="4" y2="4"/><line class="s" x1="9" x2="15" y1="9" y2="9"/><polyline class="s" points="5 7 5 11 3 9 5 7"/></svg>
  <svg class="qi" style="left:947.7px;top:356px" viewBox="0 0 18 18"><line class="s" x1="3" x2="15" y1="14" y2="14"/><line class="s" x1="3" x2="15" y1="4" y2="4"/><line class="s" x1="9" x2="15" y1="9" y2="9"/><polyline class="f s" points="3 7 3 11 5 9 3 7"/></svg>
  <svg class="qi" style="left:1076.7px;top:356px" viewBox="0 0 18 18"><polygon class="s" points="7 11 9 13 11 11 7 11"/><polygon class="s" points="7 7 9 5 11 7 7 7"/></svg>
  <svg class="qi" style="left:1201.7px;top:356px" viewBox="0 0 18 18"><polygon class="s" points="7 11 9 13 11 11 7 11"/><polygon class="s" points="7 7 9 5 11 7 7 7"/></svg>
  <svg class="qi" style="left:1244.7px;top:356px" viewBox="0 0 18 18"><line class="s" style="opacity:.4" x1="3" x2="15" y1="15" y2="15"/><polyline class="s" points="5.500 11 9 3 12.500 11"/><line class="s" x1="11.630" x2="6.380" y1="9" y2="9"/></svg>
  <svg class="qi" style="left:1275.7px;top:356px" viewBox="0 0 18 18"><g style="opacity:.6"><rect class="f" x="3" y="2" width="1" height="1"/><rect class="f" x="6" y="2" width="1" height="1"/><rect class="f" x="9" y="2" width="1" height="1"/><rect class="f" x="12" y="2" width="1" height="1"/><rect class="f" x="15" y="2" width="1" height="1"/><rect class="f" x="4" y="3" width="1" height="1"/><rect class="f" x="7" y="3" width="1" height="1"/><rect class="f" x="10" y="3" width="1" height="1"/><rect class="f" x="13" y="3" width="1" height="1"/><rect class="f" x="2" y="4" width="1" height="1"/><rect class="f" x="5" y="4" width="1" height="1"/><rect class="f" x="8" y="4" width="1" height="1"/><rect class="f" x="11" y="4" width="1" height="1"/><rect class="f" x="14" y="4" width="1" height="1"/><rect class="f" x="3" y="5" width="1" height="1"/><rect class="f" x="6" y="5" width="1" height="1"/><rect class="f" x="9" y="5" width="1" height="1"/><rect class="f" x="12" y="5" width="1" height="1"/><rect class="f" x="15" y="5" width="1" height="1"/><rect class="f" x="4" y="6" width="1" height="1"/><rect class="f" x="7" y="6" width="1" height="1"/><rect class="f" x="10" y="6" width="1" height="1"/><rect class="f" x="13" y="6" width="1" height="1"/><rect class="f" x="2" y="7" width="1" height="1"/><rect class="f" x="5" y="7" width="1" height="1"/><rect class="f" x="8" y="7" width="1" height="1"/><rect class="f" x="11" y="7" width="1" height="1"/><rect class="f" x="14" y="7" width="1" height="1"/><rect class="f" x="3" y="8" width="1" height="1"/><rect class="f" x="6" y="8" width="1" height="1"/><rect class="f" x="9" y="8" width="1" height="1"/><rect class="f" x="12" y="8" width="1" height="1"/><rect class="f" x="15" y="8" width="1" height="1"/><rect class="f" x="4" y="9" width="1" height="1"/><rect class="f" x="7" y="9" width="1" height="1"/><rect class="f" x="10" y="9" width="1" height="1"/><rect class="f" x="13" y="9" width="1" height="1"/><rect class="f" x="2" y="10" width="1" height="1"/><rect class="f" x="5" y="10" width="1" height="1"/><rect class="f" x="8" y="10" width="1" height="1"/><rect class="f" x="11" y="10" width="1" height="1"/><rect class="f" x="14" y="10" width="1" height="1"/><rect class="f" x="3" y="11" width="1" height="1"/><rect class="f" x="6" y="11" width="1" height="1"/><rect class="f" x="9" y="11" width="1" height="1"/><rect class="f" x="12" y="11" width="1" height="1"/><rect class="f" x="15" y="11" width="1" height="1"/><rect class="f" x="4" y="12" width="1" height="1"/><rect class="f" x="7" y="12" width="1" height="1"/><rect class="f" x="10" y="12" width="1" height="1"/><rect class="f" x="13" y="12" width="1" height="1"/><rect class="f" x="2" y="13" width="1" height="1"/><rect class="f" x="5" y="13" width="1" height="1"/><rect class="f" x="8" y="13" width="1" height="1"/><rect class="f" x="11" y="13" width="1" height="1"/><rect class="f" x="14" y="13" width="1" height="1"/><rect class="f" x="3" y="14" width="1" height="1"/><rect class="f" x="6" y="14" width="1" height="1"/><rect class="f" x="9" y="14" width="1" height="1"/><rect class="f" x="12" y="14" width="1" height="1"/><rect class="f" x="15" y="14" width="1" height="1"/><rect class="f" x="4" y="15" width="1" height="1"/><rect class="f" x="7" y="15" width="1" height="1"/><rect class="f" x="10" y="15" width="1" height="1"/><rect class="f" x="13" y="15" width="1" height="1"/></g><polyline class="s" points="5.500 13 9 5 12.500 13"/><line class="s" x1="11.630" x2="6.380" y1="11" y2="11"/></svg>
  <svg class="qi" style="left:1322.7px;top:356px" viewBox="0 0 18 18"><line class="s" x1="3" x2="15" y1="9" y2="9"/><line class="s" x1="3" x2="13" y1="14" y2="14"/><line class="s" x1="3" x2="9" y1="4" y2="4"/></svg>
  <svg class="qi" style="left:1371.7px;top:356px" viewBox="0 0 18 18"><line class="s" x1="5" x2="13" y1="3" y2="3"/><line class="s" x1="6" x2="9.350" y1="12" y2="3"/><line class="s" x1="11" x2="15" y1="11" y2="15"/><line class="s" x1="15" x2="11" y1="11" y2="15"/><rect class="f" height="1" rx="0.500" ry="0.500" width="7" x="2" y="14"/></svg>
  <svg class="qi" style="left:619.7px;top:382px" viewBox="0 0 18 18"><line class="s" x1="7" x2="11" y1="7" y2="11"/><path class="s" d="M8.900,4.577a3.476,3.476,0,0,1,.36,4.679A3.476,3.476,0,0,1,4.577,8.900C3.185,7.500,2.035,6.400,4.217,4.217S7.500,3.185,8.900,4.577Z"/><path class="s" d="M13.423,9.100a3.476,3.476,0,0,0-4.679-.36,3.476,3.476,0,0,0,.36,4.679c1.392,1.392,2.500,2.542,4.679.36S14.815,10.500,13.423,9.100Z"/></svg>
  <svg class="qi" style="left:650.7px;top:382px" viewBox="0 0 18 18"><rect class="s" height="10" width="12" x="3" y="4"/><circle class="f" cx="6" cy="7" r="1"/><polyline class="f" points="5 12 5 11 7 9 8 10 11 7 13 9 13 12 5 12"/></svg>
  <svg class="qi" style="left:681.7px;top:382px" viewBox="0 0 18 18"><rect class="s" height="12" width="12" x="3" y="3"/><rect class="f" height="12" width="1" x="5" y="3"/><rect class="f" height="12" width="1" x="12" y="3"/><rect class="f" height="2" width="8" x="5" y="8"/><rect class="f" height="1" width="3" x="3" y="5"/><rect class="f" height="1" width="3" x="3" y="7"/><rect class="f" height="1" width="3" x="3" y="10"/><rect class="f" height="1" width="3" x="3" y="12"/><rect class="f" height="1" width="3" x="12" y="5"/><rect class="f" height="1" width="3" x="12" y="7"/><rect class="f" height="1" width="3" x="12" y="10"/><rect class="f" height="1" width="3" x="12" y="12"/></svg>
  <span class="t" style="top:356px;font-size:15.4px;color:#444;left:1000px;">14px</span>
  <span class="t" style="top:357px;font-size:15.4px;color:#444;width:30px;text-align-last:justify;left:1125px;">文本</span>
  <span class="t" style="top:430.4px;font-size:14.3px;color:#606266;width:342.61px;text-align-last:justify;left:623px;letter-spacing:.18px;">101、102、103会议室桌椅、门窗、地面、茶水间卫生</span>
  <span class="t" style="top:662.8px;font-size:15.4px;color:#606266;font-weight:bold;width:60px;text-align-last:justify;right:1328.7px;">开始时间</span><span class="t" style="top:662.7px;font-size:16.5px;color:#f56c6c;font-weight:bold;left:519.4px;">*</span>
  <div class="box" style="left:605px;top:652px;width:243px;height:39.4px"></div>
  <svg class="abs" style="left:616px;top:664.4px;width:16px;height:16px" viewBox="0 0 16 16" fill="none" stroke="#c0c4cc" stroke-width="1.200"><circle cx="8" cy="8" r="6.600"/><path d="M8 4.200V8.400h3.600"/></svg>
  <span class="t" style="top:662.4px;font-size:15.4px;color:#606266;left:639.3px;letter-spacing:-.55px;">00:07:32</span>
  <span class="t" style="top:662.8px;font-size:15.4px;color:#606266;font-weight:bold;width:60px;text-align-last:justify;right:830.7px;">截止时间</span><span class="t" style="top:662.7px;font-size:16.5px;color:#f56c6c;font-weight:bold;left:1017.4px;">*</span>
  <div class="box" style="left:1103px;top:652px;width:243px;height:39.4px"></div>
  <svg class="abs" style="left:1114px;top:664.4px;width:16px;height:16px" viewBox="0 0 16 16" fill="none" stroke="#c0c4cc" stroke-width="1.200"><circle cx="8" cy="8" r="6.600"/><path d="M8 4.200V8.400h3.600"/></svg>
  <span class="t" style="top:662.4px;font-size:15.4px;color:#606266;left:1137.3px;letter-spacing:-.55px;">00:10:34</span>
  <span class="t" style="top:726.9px;font-size:15.4px;color:#606266;font-weight:bold;width:45px;text-align-last:justify;right:1328.7px;">执行人</span><span class="t" style="top:726.8px;font-size:16.5px;color:#f56c6c;font-weight:bold;left:534.8px;">*</span>
  <div class="box" style="left:605px;top:716px;width:227px;height:40px"></div>
  <div class="abs" style="left:612.2px;top:722.600px;width:76.800px;height:26.400px;border:1px solid #e9e9eb;border-radius:4px;background:#f4f4f5"></div>
  <span class="t" style="top:727.1px;font-size:13.2px;color:#909399;width:39px;text-align-last:justify;left:622.3px;">张小三</span>
  <div class="abs" style="left:668.8px;top:729.1px;width:14.4px;height:14.4px;border-radius:50%;background:#c0c4cc"></div>
  <svg class="abs" style="left:672px;top:732.3px;width:8px;height:8px" viewBox="0 0 8 8" stroke="#fff" stroke-width="1" opacity=".62"><path d="M1 1l6 6M7 1l-6 6"/></svg>
  <div class="abs" style="left:695px;top:722.600px;width:76.800px;height:26.400px;border:1px solid #e9e9eb;border-radius:4px;background:#f4f4f5"></div>
  <span class="t" style="top:727.1px;font-size:13.2px;color:#909399;width:39px;text-align-last:justify;left:705.1px;">王大妈</span>
  <div class="abs" style="left:751.6px;top:729.1px;width:14.4px;height:14.4px;border-radius:50%;background:#c0c4cc"></div>
  <svg class="abs" style="left:754.8px;top:732.3px;width:8px;height:8px" viewBox="0 0 8 8" stroke="#fff" stroke-width="1" opacity=".62"><path d="M1 1l6 6M7 1l-6 6"/></svg>
  <svg class="abs" style="left:806.05px;top:730.25px;width:13.5px;height:13.5px" viewBox="0 0 12 12" fill="none" stroke="#c0c4cc" stroke-width="1.1" opacity="1"><path d="M1 4l5 5 5-5"/></svg>
  <span class="t" style="top:791.6px;font-size:15.4px;color:#606266;font-weight:bold;width:30px;text-align-last:justify;right:1329.6px;">备注</span>
  <div class="box" style="left:605px;top:781.500px;width:841px;height:60px"></div>
  <span class="t" style="top:790.4px;font-size:15.4px;color:#c0c4cc;width:75px;text-align-last:justify;left:622.8px;">请输入内容</span>
  <div class="abs" style="left:1468px;top:115px;width:15.7px;height:705px;background:#fafafa"></div>
  <svg class="abs" style="left:1470.9px;top:120.9px;width:11.1px;height:6px" viewBox="0 0 11 6" fill="#8b8b8b" preserveAspectRatio="none"><path d="M0 6L5.500 0L11 6z"/></svg>
  <div class="abs" style="left:1471.9px;top:134.6px;width:9.1px;height:599.4px;border-radius:5px;background:#8b8b8b"></div>
  <svg class="abs" style="left:1470.9px;top:807px;width:11.1px;height:6px" viewBox="0 0 11 6" fill="#8b8b8b" preserveAspectRatio="none"><path d="M0 0L5.500 6L11 0z"/></svg>
  </div></div>
  <div class="g">
  <div class="abs" style="left:1289px;top:831px;width:81px;height:39px;background:#1890ff;border-radius:4px"></div>
  <span class="t" style="top:841.3px;font-size:15.4px;color:#fff;width:34.28px;text-align-last:justify;left:1312.76px;">确 定</span>
  <div class="box" style="left:1381.300px;top:831px;width:81.400px;height:39px"></div>
  <span class="t" style="top:841.1px;font-size:15.4px;color:#606266;width:34.28px;text-align-last:justify;left:1405.26px;">取 消</span>
  </div>
</div>
</body>
</html>
